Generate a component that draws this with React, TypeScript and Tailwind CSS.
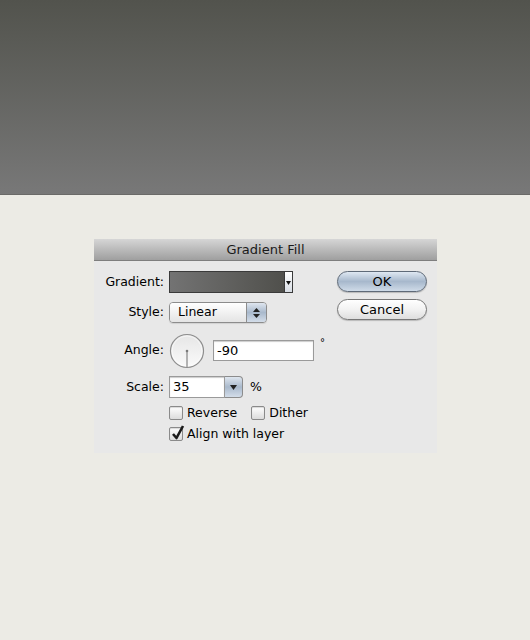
import React from "react";

const font = { fontFamily: '"DejaVu Sans", "Liberation Sans", sans-serif' };

const Checkbox = ({ checked, label }: { checked?: boolean; label: string }) => (
  <label className="flex items-center h-[14px] gap-[4px]">
    <span className="relative w-[14px] h-[14px] rounded-[2px] border border-[#8a8a8a] bg-gradient-to-b from-white to-[#dcdcdc] shadow-[inset_0_1px_1px_rgba(0,0,0,0.15)]">
      {checked && (
        <svg className="absolute left-[1px] -top-[3px]" width="14" height="15" viewBox="0 0 14 15">
          <path d="M2 9 L5.5 13 L12 1" fill="none" stroke="#1b1b1b" strokeWidth="2.6" strokeLinejoin="round" />
        </svg>
      )}
    </span>
    <span className="text-[12.5px] text-black leading-none">{label}</span>
  </label>
);

export default function App() {
  return (
    <div className="w-[530px] h-[640px] bg-[#ecebe5]" style={font}>
      <div className="h-[195px] bg-gradient-to-b from-[#52534d] to-[#787878] border-b border-[#6a6a68]" />

      <div className="ml-[94px] mt-[44px] w-[343px] bg-[#e8e8e8]">
        <div className="h-[22px] flex items-center justify-center bg-gradient-to-b from-[#d6d6d6] to-[#9f9f9f] border-b border-[#7e7e7e]">
          <span className="text-[13px] text-[#1a1a1a]">Gradient Fill</span>
        </div>

        <div className="flex pt-[10px] pb-[12px] pr-[10px]">
          <div className="grid grid-cols-[70px_auto] gap-x-[5px] text-[12.5px] text-black">
            {/* Gradient */}
            <span className="h-[22px] flex items-center justify-end">Gradient:</span>
            <div className="h-[22px] flex border border-[#3a3a3a] w-[124px]">
              <div className="flex-1 bg-gradient-to-r from-[#737373] to-[#50504c]" />
              <div className="w-[8px] bg-gradient-to-b from-white to-[#d8dde4] border-l border-[#3a3a3a] flex items-center justify-center">
                <svg width="5" height="5" viewBox="0 0 5 5">
                  <path d="M0 1 L5 1 L2.5 5 Z" fill="#111" />
                </svg>
              </div>
            </div>

            {/* Style */}
            <span className="mt-[9px] h-[21px] flex items-center justify-end">Style:</span>
            <div className="mt-[9px] h-[21px] w-[98px] flex rounded-[4px] border border-[#8c8c8c] overflow-hidden shadow-[0_1px_1px_rgba(0,0,0,0.1)]">
              <div className="flex-1 flex items-center pl-[8px] bg-gradient-to-b from-white to-[#e4e4e4]">Linear</div>
              <div className="w-[20px] border-l border-[#8c8c8c] bg-gradient-to-b from-[#dfe6ef] via-[#a9b9cc] to-[#d3dde9] flex flex-col items-center justify-center gap-[2px]">
                <svg width="7" height="4" viewBox="0 0 7 4"><path d="M0 4 L3.5 0 L7 4 Z" fill="#222" /></svg>
                <svg width="7" height="4" viewBox="0 0 7 4"><path d="M0 0 L7 0 L3.5 4 Z" fill="#222" /></svg>
              </div>
            </div>

            {/* Angle */}
            <span className="mt-[10px] h-[35px] flex items-center justify-end">Angle:</span>
            <div className="mt-[10px] h-[35px] flex items-center">
              <svg width="36" height="36" viewBox="0 0 36 36">
                <defs>
                  <linearGradient id="dial" x1="0" y1="0" x2="0" y2="1">
                    <stop offset="0" stopColor="#e6e6e6" />
                    <stop offset="1" stopColor="#fafafa" />
                  </linearGradient>
                </defs>
                <circle cx="18" cy="18" r="16.5" fill="url(#dial)" stroke="#8d8d8d" strokeWidth="1.2" />
                <circle cx="18" cy="18" r="15" fill="none" stroke="#ffffff" strokeWidth="0.8" opacity="0.7" />
                <line x1="18" y1="18" x2="18" y2="34" stroke="#6e6e6e" strokeWidth="1" />
                <circle cx="18" cy="18" r="1.3" fill="#7a7a7a" />
              </svg>
              <div className="ml-[8px] w-[101px] h-[21px] bg-white border border-[#9a9a9a] shadow-[inset_0_1px_1px_rgba(0,0,0,0.2)] flex items-center pl-[3px] text-[13px]">
                -90
              </div>
              <span className="ml-[6px] self-start mt-[5px] text-[10px] leading-none">°</span>
            </div>

            {/* Scale */}
            <span className="mt-[8px] h-[22px] flex items-center justify-end">Scale:</span>
            <div className="mt-[8px] h-[22px] flex items-center">
              <div className="w-[74px] h-[22px] flex">
                <div className="flex-1 bg-white border border-[#9a9a9a] shadow-[inset_0_1px_1px_rgba(0,0,0,0.2)] flex items-center pl-[3px] text-[13px]">35</div>
                <div className="w-[18px] rounded-r-[4px] border border-l-0 border-[#8c8c8c] bg-gradient-to-b from-[#dfe6ef] via-[#a9b9cc] to-[#d3dde9] flex items-center justify-center">
                  <svg width="7" height="5" viewBox="0 0 7 5"><path d="M0 0 L7 0 L3.5 5 Z" fill="#222" /></svg>
                </div>
              </div>
              <span className="ml-[7px]">%</span>
            </div>

            {/* Reverse / Dither */}
            <span className="mt-[8px]" />
            <div className="mt-[8px] flex gap-[14px]">
              <Checkbox label="Reverse" />
              <Checkbox label="Dither" />
            </div>

            {/* Align */}
            <span className="mt-[7px]" />
            <div className="mt-[7px]">
              <Checkbox checked label="Align with layer" />
            </div>
          </div>

          <div className="ml-auto flex flex-col gap-[7px] text-[13px] text-black">
            <button className="w-[90px] h-[21px] rounded-full border border-[#5f6a78] bg-gradient-to-b from-[#dfe8f2] via-[#a7b8cc] to-[#cfdbe8] shadow-[0_1px_1px_rgba(0,0,0,0.2)] leading-none">
              OK
            </button>
            <button className="w-[90px] h-[21px] rounded-full border border-[#777] bg-gradient-to-b from-white via-[#f2f2f2] to-[#dedede] shadow-[0_1px_1px_rgba(0,0,0,0.2)] leading-none">
              Cancel
            </button>
          </div>
        </div>
      </div>
    </div>
  );
}
